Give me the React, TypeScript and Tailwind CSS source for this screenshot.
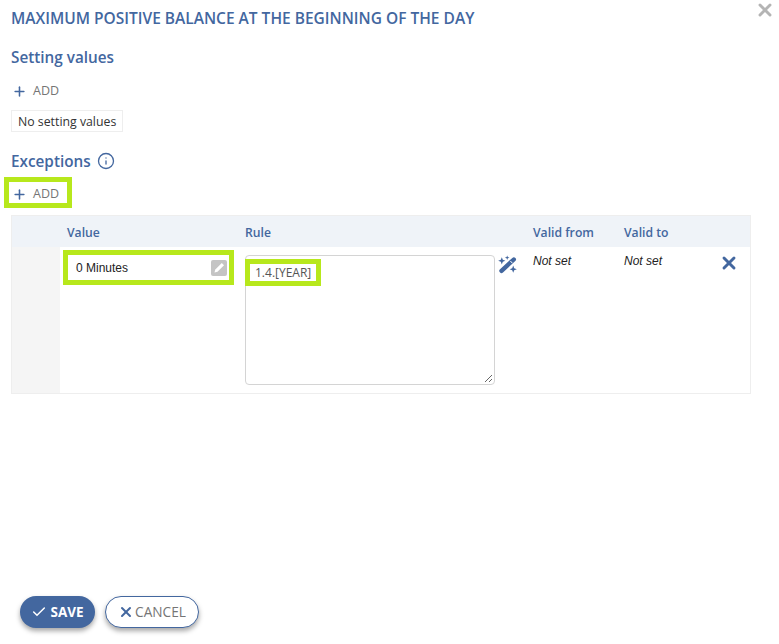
import { Plus, Check, X, Info } from "lucide-react";

const blue = "text-[#43679f]";

function AddButton() {
  return (
    <span className="flex items-center gap-[6px]">
      <Plus size={15} strokeWidth={2.5} className="text-[#43679f]" />
      <span className="text-[12.5px] font-medium text-[#757575] font-['Open_Sans',sans-serif]">ADD</span>
    </span>
  );
}

export default function App() {
  return (
    <div className="relative h-[644px] w-[779px] bg-white flex flex-col font-['Open_Sans',sans-serif] overflow-hidden">
      <X size={20} strokeWidth={3.5} className="absolute right-[4px] top-0 text-[#b4b4b4]" />
      <div className="flex flex-col pl-[11px] pr-[28px] pt-[10px]">
        <h1 className={`h-[17px] text-[15.5px] leading-[17px] font-semibold whitespace-nowrap ${blue}`}>
          MAXIMUM POSITIVE BALANCE AT THE BEGINNING OF THE DAY
        </h1>
        <h2 className={`mt-[21px] h-[18px] text-[15.3px] leading-[18px] font-semibold ${blue}`}>Setting values</h2>
        <div className="mt-[16px] ml-[1px] h-[18px] flex items-center"><AddButton /></div>
        <div className="mt-[10px] self-start h-[22px] px-[6px] border border-[#eeeeee] text-[12.3px] leading-[21px] text-[#333333]">
          No setting values
        </div>
        <div className="mt-[20px] flex items-center gap-[6px] h-[18px]">
          <h2 className={`text-[15.3px] leading-[18px] font-semibold ${blue}`}>Exceptions</h2>
          <Info size={18} strokeWidth={1.75} className="text-[#43679f]" />
        </div>
        <div className="mt-[7px] -ml-[7px] self-start h-[31px] w-[68px] border-[5px] border-[#b7e81c] pl-[3px] pt-[4px] flex items-center"><AddButton /></div>

        <div className="mt-[7px] w-[740px] h-[179px] border border-[#eeeeee] flex flex-col">
          <div className={`h-[31px] flex-none bg-[#eff3f8] flex items-center pt-[3px] text-[12.2px] font-semibold ${blue}`}>
            <div className="w-[55px]" />
            <div className="w-[178px]">Value</div>
            <div className="w-[288px]">Rule</div>
            <div className="w-[91px]">Valid from</div>
            <div>Valid to</div>
          </div>
          <div className="flex-1 flex">
            <div className="w-[48px] bg-[#f5f5f5]" />
            <div className="flex-1 flex">
              <div className="w-[185px] pl-[3px] pt-[3px]">
                <div className="h-[35px] w-[171px] border-[5px] border-[#b7e81c] flex items-center justify-between pl-[8px] pr-[2px]">
                  <span className="text-[12px] text-[#222222] font-['Liberation_Sans',sans-serif]">0 Minutes</span>
                  <span className="w-[16px] h-[16px] rounded-[2px] bg-[#c4c4c4] flex items-center justify-center">
                    <svg width="13" height="13" viewBox="0 0 13 13">
                      <path d="M1.5 11.5 2.3 8.5 8.8 2 11 4.2 4.5 10.7Z" fill="#ffffff" />
                    </svg>
                  </span>
                </div>
              </div>
              <div className="relative w-[250px] h-[130px] mt-[8px] rounded-[4px] border border-[#d4d4d4]">
                <div className="absolute -left-px top-[3px] h-[27px] w-[76px] border-[5px] border-[#b7e81c] flex items-center pl-[5px] bg-white">
                  <span className="text-[12px] text-[#555555] whitespace-nowrap">1.4.[YEAR]</span>
                </div>
                <svg width="9" height="9" viewBox="0 0 9 9" className="absolute right-[1px] bottom-[1px] text-[#666666]">
                  <path d="M1 8 8 1M5 8 8 5" stroke="currentColor" strokeWidth="1" />
                </svg>
              </div>
              <div className="w-[38px] pl-[3px] pt-[8px]">
                <svg width="20" height="20" viewBox="0 0 20 20" className="text-[#43679f]" fill="currentColor">
                  <path d="M3.5 15.8 15.8 4.5" stroke="currentColor" strokeWidth="4.4" strokeLinecap="round" fill="none" />
                  <path d="M12.4 6 14.4 8.2" stroke="#ffffff" strokeWidth="1" fill="none" />
                  <path d="M3.8 2.2 4.8 4.8 7.4 5.8 4.8 6.8 3.8 9.4 2.8 6.8.2 5.8 2.8 4.8Z" />
                  <path d="M15.2 10.6 16.2 13.2 18.8 14.2 16.2 15.2 15.2 17.8 14.2 15.2 11.6 14.2 14.2 13.2Z" />
                  <path d="M9.2.4 9.8 2.1 11.5 2.7 9.8 3.3 9.2 5 8.6 3.3 6.9 2.7 8.6 2.1Z" />
                </svg>
              </div>
              <div className="w-[91px] pt-[5px] text-[12px] italic text-[#222222] font-['Liberation_Sans',sans-serif]">Not set</div>
              <div className="w-[95px] pt-[5px] text-[12px] italic text-[#222222] font-['Liberation_Sans',sans-serif]">Not set</div>
              <div className="pt-[6px]"><X size={20} strokeWidth={3.5} className="text-[#43679f]" /></div>
            </div>
          </div>
        </div>
      </div>
      <div className="mt-auto mb-[16px] ml-[20px] flex gap-[10px]">
        <button className="h-[32px] w-[75px] rounded-full bg-[#43679f] text-white flex items-center justify-center gap-[3px] text-[13.5px] font-bold shadow-[0_3px_5px_rgba(0,0,0,0.35)]">
          <Check size={16} strokeWidth={2.25} /> SAVE
        </button>
        <button className="h-[32px] w-[94px] rounded-full bg-white border border-[#43679f] text-[#757575] flex items-center justify-center gap-[1px] text-[13.7px] shadow-[0_3px_5px_rgba(0,0,0,0.35)]">
          <X size={16} strokeWidth={3} className="text-[#43679f]" /> CANCEL
        </button>
      </div>
    </div>
  );
}
